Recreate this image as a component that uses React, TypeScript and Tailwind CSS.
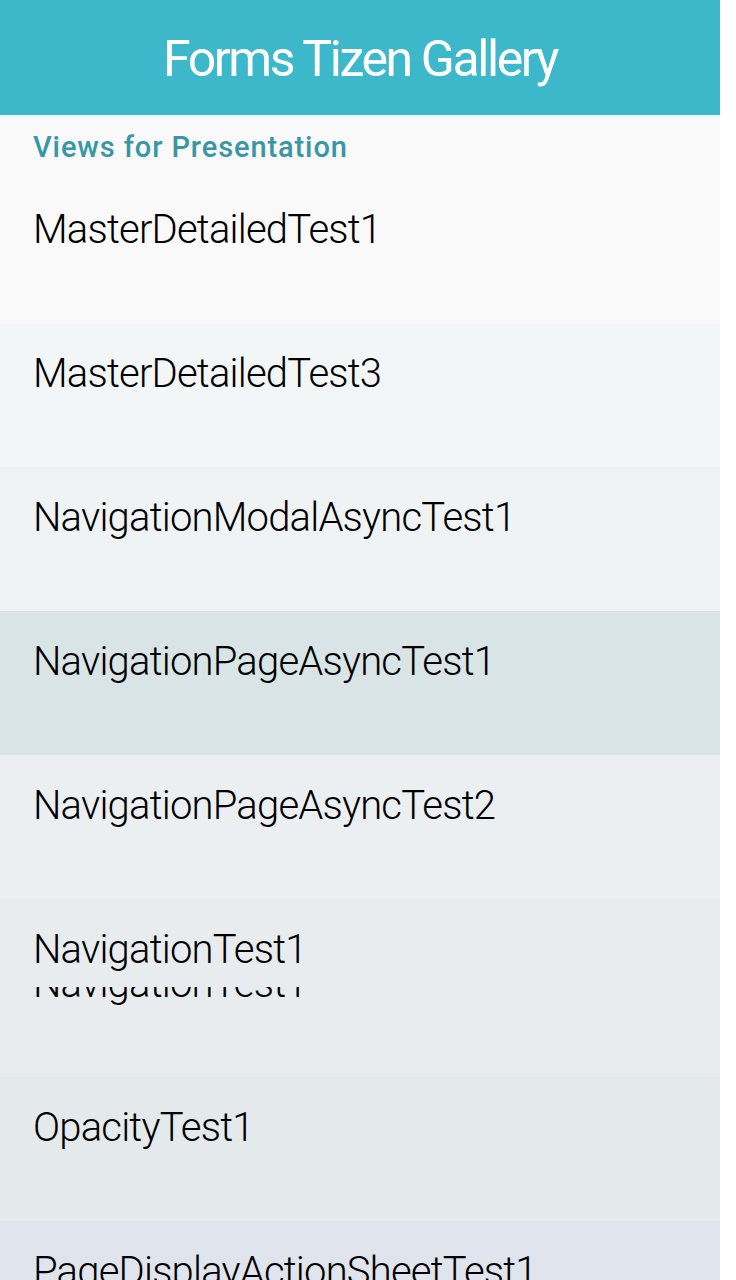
const items = [
  { name: "MasterDetailedTest3", bg: "bg-[#f3f6f7]" },
  { name: "NavigationModalAsyncTest1", bg: "bg-[#eff3f4]" },
  { name: "NavigationPageAsyncTest1", bg: "bg-[#d9e4e6]" },
  { name: "NavigationPageAsyncTest2", bg: "bg-[#ebeff1]" },
];

function Row({ name, bg }: { name: string; bg: string }) {
  return (
    <div className={`h-[144px] pl-[33px] pt-[31px] ${bg}`}>
      <div className="text-[40px] leading-[40px] font-light tracking-[-0.8px] text-black">{name}</div>
    </div>
  );
}

export default function App() {
  return (
    <div className="w-[736px] h-[1280px] overflow-hidden bg-white font-['Roboto',sans-serif]">
      <div className="w-[720px]">
        {/* Title bar */}
        <div className="h-[115px] bg-[#3db8cb] pt-[34px] text-center">
          <div className="text-[50px] leading-[50px] text-white tracking-[-2.4px]">Forms Tizen Gallery</div>
        </div>
        <div className="h-[2px] bg-[#e4f4f7]" />

        {/* Group header + first item */}
        <div className="bg-[#f9f9f9]">
          <div className="h-[62px] pl-[33px] pt-[16px]">
            <div className="text-[29px] leading-[29px] font-medium tracking-[0.9px] text-[#3797a5]">Views for Presentation</div>
          </div>
          <div className="h-[144px] pl-[33px] pt-[31px]">
            <div className="text-[40px] leading-[40px] font-light tracking-[-0.8px] text-black">MasterDetailedTest1</div>
          </div>
        </div>

        {items.map((it) => (
          <Row key={it.name} name={it.name} bg={it.bg} />
        ))}

        {/* Row with a leftover ghost line under the label */}
        <div className="h-[178px] pl-[33px] pt-[31px] bg-[#e8ecef]">
          <div className="text-[40px] leading-[40px] font-light tracking-[-0.8px] text-black">NavigationTest1</div>
          <div className="mt-[17px] h-[22px] overflow-hidden">
            <div className="-mt-[23px] text-[40px] leading-[40px] font-light tracking-[-0.8px] text-black">NavigationTest1</div>
          </div>
        </div>

        <Row name="OpacityTest1" bg="bg-[#e4e9ec]" />
        <Row name="PageDisplayActionSheetTest1" bg="bg-[#e0e4ec]" />
      </div>
    </div>
  );
}
